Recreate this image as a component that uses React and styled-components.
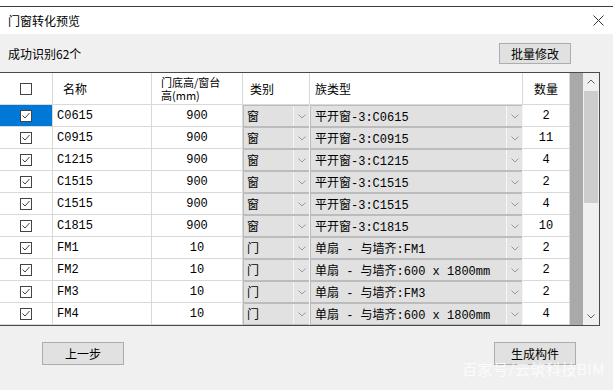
import React from "react";
import styled, { createGlobalStyle } from "styled-components";

const GlobalStyle = createGlobalStyle`
  html, body {
    margin: 0;
    padding: 0;
    background: #ffffff;
  }
  body {
    font-family: "Noto Sans CJK SC", "Liberation Sans", sans-serif;
    color: #000;
  }
`;

const SANS = `"Noto Sans CJK SC", "Liberation Sans", sans-serif`;
const MONO = `"Liberation Mono", "Noto Sans CJK SC", monospace`;

const Window = styled.div`
  width: 613px;
  height: 390px;
  background: #f0f0f0;
  display: flex;
  flex-direction: column;
  position: relative;
  overflow: hidden;
`;

const TopEdge = styled.div`
  height: 6px;
  background: #ffffff;
  border-bottom: 1px solid #3c3c3c;
`;

const TitleBar = styled.div`
  height: 29px;
  background: #ffffff;
  display: flex;
  align-items: center;
  justify-content: space-between;
  padding: 0 9px 0 8px;
  font-family: ${SANS};
  font-size: 12px;
`;

const CloseIcon = styled.svg`
  width: 11px;
  height: 11px;
`;

const Toolbar = styled.div`
  height: 41px;
  display: flex;
  align-items: center;
  justify-content: space-between;
  padding: 0 42px 0 8px;
  font-family: ${SANS};
  font-size: 12px;
`;

const Button = styled.div`
  width: ${({ $w }) => $w}px;
  height: ${({ $h }) => $h}px;
  box-sizing: border-box;
  background: #e1e1e1;
  border: 1px solid #adadad;
  display: flex;
  align-items: center;
  justify-content: center;
  font-family: ${SANS};
  font-size: 12px;
`;

const TableFrame = styled.div`
  width: 600px;
  height: 255px;
  box-sizing: border-box;
  display: flex;
  border-top: 1px solid #4a4a4a;
  border-bottom: 1px solid #4a4a4a;
  border-right: 1px solid #4a4a4a;
  background: #ababab;
`;

const Grid = styled.div`
  display: grid;
  grid-template-columns: 53px 99px 91px 67px 213px 47px;
  grid-template-rows: 32px repeat(10, 22px);
  align-content: start;
`;

const Filler = styled.div`
  flex: 1;
  background: #a9a9a9;
`;

const HeadCell = styled.div`
  box-sizing: border-box;
  background: #ffffff;
  border-right: 1px solid #d9d9d9;
  border-bottom: 1px solid #d9d9d9;
  display: flex;
  align-items: center;
  justify-content: ${({ $center }) => ($center ? "center" : "flex-start")};
  padding-left: ${({ $pad }) => $pad || 0}px;
  font-family: ${SANS};
  font-size: 12px;
`;

const HeadStack = styled.div`
  font-size: 11px;
  line-height: 13px;
`;

const Cell = styled.div`
  box-sizing: border-box;
  background: ${({ $selected }) => ($selected ? "#0078d7" : "#ffffff")};
  border-right: 1px solid #d9d9d9;
  border-bottom: 1px solid #d9d9d9;
  display: flex;
  align-items: center;
  justify-content: ${({ $center }) => ($center ? "center" : "flex-start")};
  padding-left: ${({ $pad }) => $pad || 0}px;
  font-family: ${MONO};
  font-size: 12px;
  white-space: pre;
`;

const ComboCell = styled.div`
  box-sizing: border-box;
  background: #bcbcbc;
  border-right: 1px solid #f4f4f4;
  padding: 1px 0 1px 1px;
  display: flex;
`;

const ComboField = styled.div`
  flex: 1;
  background: #e1e1e1;
  display: flex;
  align-items: center;
  padding-left: ${({ $pad }) => $pad}px;
  font-family: ${MONO};
  font-size: 12px;
  white-space: pre;
`;

const ComboArrow = styled.div`
  width: 15px;
  background: #e4e4e4;
  border-left: 1px solid #f6f6f6;
  display: flex;
  align-items: center;
  justify-content: center;
`;

const Box = styled.div`
  width: 12px;
  height: 12px;
  box-sizing: border-box;
  border: 1px solid #444444;
  background: #ffffff;
  display: flex;
  align-items: center;
  justify-content: center;
`;

const Scrollbar = styled.div`
  width: 16px;
  background: #f0f0f0;
  display: flex;
  flex-direction: column;
`;

const ScrollArrow = styled.div`
  height: 17px;
  display: flex;
  align-items: center;
  justify-content: center;
`;

const Track = styled.div`
  flex: 1;
  padding: 1px 1px 0;
`;

const Thumb = styled.div`
  height: 112px;
  background: #cdcdcd;
`;

const Footer = styled.div`
  height: 51px;
  display: flex;
  align-items: flex-start;
  justify-content: space-between;
  padding: 16px 37px 0 42px;
`;

const BottomEdge = styled.div`
  flex: 1;
  background: #ffffff;
`;

const Watermark = styled.div`
  position: absolute;
  left: 462px;
  top: 358px;
  font-family: ${SANS};
  font-size: 15px;
  letter-spacing: 0.5px;
  color: rgba(255, 255, 255, 0.8);
  pointer-events: none;
`;

const Chevron = ({ up, color = "#9a9a9a" }) => (
  <svg width="8" height="5" viewBox="0 0 8 5">
    <path
      d={up ? "M0.5 4.5 L4 1 L7.5 4.5" : "M0.5 0.5 L4 4 L7.5 0.5"}
      fill="none"
      stroke={color}
      strokeWidth="1"
    />
  </svg>
);

const CheckBox = ({ checked }) => (
  <Box>
    {checked ? (
      <svg width="10" height="10" viewBox="0 0 10 10">
        <path d="M1.5 4.5 L4 7 L8.5 2" fill="none" stroke="#444" strokeWidth="1" />
      </svg>
    ) : null}
  </Box>
);

const rows = [
  ["C0615", "900", "窗", "平开窗-3:C0615", "2"],
  ["C0915", "900", "窗", "平开窗-3:C0915", "11"],
  ["C1215", "900", "窗", "平开窗-3:C1215", "4"],
  ["C1515", "900", "窗", "平开窗-3:C1515", "2"],
  ["C1515", "900", "窗", "平开窗-3:C1515", "4"],
  ["C1815", "900", "窗", "平开窗-3:C1815", "10"],
  ["FM1", "10", "门", "单扇 - 与墙齐:FM1", "2"],
  ["FM2", "10", "门", "单扇 - 与墙齐:600 x 1800mm", "2"],
  ["FM3", "10", "门", "单扇 - 与墙齐:FM3", "2"],
  ["FM4", "10", "门", "单扇 - 与墙齐:600 x 1800mm", "4"],
];

export default function App() {
  return (
    <>
      <GlobalStyle />
      <Window>
        <TopEdge />
        <TitleBar>
          <span>门窗转化预览</span>
          <CloseIcon viewBox="0 0 11 11">
            <path d="M0.5 0.5 L10.5 10.5 M10.5 0.5 L0.5 10.5" stroke="#333" strokeWidth="1" />
          </CloseIcon>
        </TitleBar>

        <Toolbar>
          <span>成功识别62个</span>
          <Button $w={72} $h={21}>批量修改</Button>
        </Toolbar>

        <TableFrame>
          <Grid>
            <HeadCell $center>
              <CheckBox />
            </HeadCell>
            <HeadCell $pad={10}>名称</HeadCell>
            <HeadCell $pad={9}>
              <HeadStack>
                门底高/窗台
                <br />
                高(mm)
              </HeadStack>
            </HeadCell>
            <HeadCell $pad={7}>类别</HeadCell>
            <HeadCell $pad={5}>族类型</HeadCell>
            <HeadCell $center>数量</HeadCell>

            {rows.map((r, i) => (
              <React.Fragment key={i}>
                <Cell $center $selected={i === 0}>
                  <CheckBox checked />
                </Cell>
                <Cell $pad={4}>{r[0]}</Cell>
                <Cell $center>{r[1]}</Cell>
                <ComboCell>
                  <ComboField $pad={3}>{r[2]}</ComboField>
                  <ComboArrow>
                    <Chevron />
                  </ComboArrow>
                </ComboCell>
                <ComboCell>
                  <ComboField $pad={4}>{r[3]}</ComboField>
                  <ComboArrow>
                    <Chevron />
                  </ComboArrow>
                </ComboCell>
                <Cell $center>{r[4]}</Cell>
              </React.Fragment>
            ))}
          </Grid>
          <Filler />
          <Scrollbar>
            <ScrollArrow>
              <Chevron up color="#606060" />
            </ScrollArrow>
            <Track>
              <Thumb />
            </Track>
            <ScrollArrow>
              <Chevron color="#606060" />
            </ScrollArrow>
          </Scrollbar>
        </TableFrame>

        <Footer>
          <Button $w={82} $h={23}>上一步</Button>
          <Button $w={82} $h={23}>生成构件</Button>
        </Footer>
        <BottomEdge />
        <Watermark>百家号/云筑科技BIM</Watermark>
      </Window>
    </>
  );
}
